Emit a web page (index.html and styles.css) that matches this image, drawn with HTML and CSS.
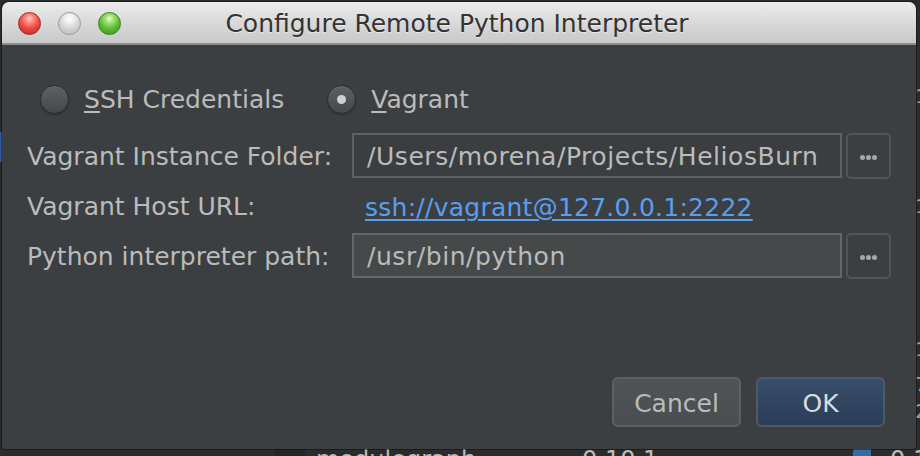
FILE: index.html
```html
<!DOCTYPE html>
<html>
<head>
<meta charset="utf-8">
<link rel="stylesheet" href="styles.css">
</head>
<body>
<div class="backdrop">
  <div class="bd-row bd-r1"><span class="bd-name"></span><span class="bd-ver">1</span></div>
  <div class="bd-row bd-sel"><span class="bd-name"></span><span class="bd-ver"></span></div>
  <div class="bd-row bd-r2"><span class="bd-name"></span><span class="bd-ver">1</span></div>
  <div class="bd-row bd-r3"><span class="bd-name"></span><span class="bd-ver">1</span></div>
  <div class="bd-row bd-r4"><span class="bd-name"></span><span class="bd-ver">7</span></div>
  <div class="bd-row bd-r5"><span class="bd-name"></span><span class="bd-ver">2</span></div>
  <div class="bd-last">
    <span class="bd-gut"></span>
    <span class="bd-col"></span>
    <span class="bd-mod">modulegraph</span>
    <span class="bd-v1">0.10.1</span>
    <span class="bd-icon"></span>
    <span class="bd-v2">0.1</span>
  </div>
</div>

<div class="dialog">
  <div class="titlebar">
    <div class="lights">
      <span class="light red"></span>
      <span class="light gray"></span>
      <span class="light green"></span>
    </div>
    <div class="title">Configure Remote Python Interpreter</div>
  </div>
  <div class="content">
    <div class="radios">
      <label class="radio"><span class="circle"></span><span class="rlabel"><u>S</u>SH Credentials</span></label>
      <label class="radio"><span class="circle checked"></span><span class="rlabel"><u>V</u>agrant</span></label>
    </div>
    <div class="form">
      <div class="label">Vagrant Instance Folder:</div>
      <div class="field">/Users/morena/Projects/HeliosBurn</div>
      <div class="browse"><span class="dot"></span><span class="dot"></span><span class="dot"></span></div>

      <div class="label">Vagrant Host URL:</div>
      <div class="linkcell"><a class="link">ssh://vagrant@127.0.0.1:2222</a></div>
      <div></div>

      <div class="label">Python interpreter path:</div>
      <div class="field field2">/usr/bin/python</div>
      <div class="browse"><span class="dot"></span><span class="dot"></span><span class="dot"></span></div>
    </div>
    <div class="footer">
      <button class="btn cancel">Cancel</button>
      <button class="btn ok">OK</button>
    </div>
  </div>
</div>
</body>
</html>
```
FILE: styles.css
```css
html, body {
  margin: 0;
  padding: 0;
}
body {
  width: 920px;
  height: 456px;
  overflow: hidden;
  background: #2b2b2b;
  position: relative;
  font-family: "DejaVu Sans", "Noto Sans", sans-serif;
}

/* backdrop (IDE behind the modal) */
.backdrop {
  display: flex;
  flex-direction: column;
  width: 920px;
  height: 456px;
  font-size: 20px;
}
.bd-row {
  display: flex;
  align-items: flex-start;
  box-sizing: border-box;
}
.bd-name { width: 915px; flex: none; }
.bd-ver { color: #a0a0a0; line-height: 16px; }
.bd-r1 { height: 132px; padding-top: 88px; }
.bd-sel { height: 30px; background: linear-gradient(to right, #2f5aa8 0 3px, transparent 3px); }
.bd-r2 { height: 178px; padding-top: 36px; }
.bd-r3 { height: 35px; padding-top: 2px; }
.bd-r4 { height: 26px; padding-top: 2px; }
.bd-r5 { height: 30px; padding-top: 3px; }
.bd-last {
  display: flex;
  height: 26px;
  margin-top: auto;
  font-size: 24px;
  color: #bbbbbb;
  line-height: 26px;
  box-sizing: border-box;
  padding-top: 17px;
  overflow: hidden;
  flex: none;
}
.bd-gut { width: 275px; flex: none; }
.bd-col { width: 30px; height: 40px; background: #232525; flex: none; margin-top: -17px; }
.bd-mod { width: 266px; padding-left: 11px; flex: none; }
.bd-v1 { width: 271px; flex: none; }
.bd-icon { width: 18px; height: 20px; background: #2f6fa8; border-radius: 60% 0 0 0; flex: none; margin-right: 19px; margin-top: -6px; }

/* dialog */
.dialog {
  position: absolute;
  left: 2px;
  top: 2px;
  width: 914px;
  height: 447px;
  background: #3c3f41;
  border-radius: 7px 7px 3px 3px;
  display: flex;
  flex-direction: column;
  overflow: hidden;
  box-shadow: 0 0 0 1px rgba(0,0,0,0.35);
}
.titlebar {
  height: 41px;
  flex: none;
  background: linear-gradient(#ececec, #d6d6d6 60%, #c9c9c9);
  border-bottom: 2px solid #8c8c8c;
  display: grid;
  grid-template-areas: "bar";
  align-items: center;
}
.lights {
  grid-area: bar;
  justify-self: start;
  display: flex;
  gap: 17px;
  padding-left: 16px;
  padding-top: 2px;
}
.light {
  width: 23px;
  height: 23px;
  border-radius: 50%;
  box-sizing: border-box;
}
.red {
  background: radial-gradient(circle at 50% 28%, #ffd0cc 0, #ff8a80 22%, #e8453c 55%, #c22a24 100%);
  border: 1px solid #9e2a25;
}
.gray {
  background: radial-gradient(circle at 50% 28%, #ffffff 0, #eeeeee 25%, #cfcfcf 60%, #b9b9b9 100%);
  border: 1px solid #9a9a9a;
}
.green {
  background: radial-gradient(circle at 50% 28%, #e6ffd6 0, #9be070 24%, #57b52f 58%, #3c9420 100%);
  border: 1px solid #3c7d24;
}
.title {
  grid-area: bar;
  justify-self: center;
  font-size: 25px;
  color: #333333;
  text-shadow: 0 1px 0 rgba(255,255,255,0.5);
  padding-top: 1px;
  margin-right: 4px;
}

.content {
  flex: 1;
  display: flex;
  flex-direction: column;
  padding: 0 31px 22px 25px;
  color: #bbbbbb;
  font-size: 25px;
}
.radios {
  display: flex;
  align-items: center;
  height: 30px;
  margin-top: 39px;
  margin-left: 13px;
  gap: 43px;
}
.radio {
  display: flex;
  align-items: center;
  gap: 15px;
}
.circle {
  width: 29px;
  height: 29px;
  box-sizing: border-box;
  border-radius: 50%;
  border: 1px solid #2a2c2d;
  background: linear-gradient(#5c6062, #44484a);
  box-shadow: inset 0 1px 0 rgba(255,255,255,0.08), 0 1px 1px rgba(0,0,0,0.3);
  display: flex;
  align-items: center;
  justify-content: center;
}
.circle.checked::after {
  content: "";
  width: 9px;
  height: 9px;
  border-radius: 50%;
  background: #d0d0d0;
}
.rlabel u {
  text-decoration-thickness: 2px;
  text-underline-offset: 3px;
}

.form {
  margin-top: 19px;
  display: grid;
  grid-template-columns: 321px 490px 45px;
  grid-auto-rows: 45px;
  column-gap: 4px;
  row-gap: 5px;
  align-items: center;
}
.label {
  white-space: nowrap;
  position: relative;
  top: 1px;
}
.field {
  height: 45px;
  box-sizing: border-box;
  border: 2px solid #5f6163;
  background: #3b3e40;
  padding-left: 13px;
  padding-top: 2px;
  display: flex;
  align-items: center;
  white-space: nowrap;
  overflow: hidden;
  letter-spacing: 0.55px;
}
.field2 {
  background: #45494a;
  border-color: #646668;
}
.linkcell {
  padding-left: 13px;
  position: relative;
  top: 2px;
}
.link {
  color: #5a9ef0;
  text-decoration: underline;
  text-decoration-thickness: 2px;
  text-underline-offset: 3px;
  white-space: nowrap;
  letter-spacing: 0.25px;
}
.browse {
  height: 46px;
  box-sizing: border-box;
  border: 2px solid #525456;
  border-radius: 5px;
  background: #3c3f41;
  display: flex;
  align-items: center;
  justify-content: center;
  gap: 1px;
  padding-top: 4px;
}
.dot {
  width: 5px;
  height: 5px;
  border-radius: 50%;
  background: #a8a8a8;
}

.footer {
  margin-top: auto;
  display: flex;
  justify-content: flex-end;
  gap: 15px;
}
.btn {
  width: 129px;
  height: 50px;
  box-sizing: border-box;
  border-radius: 6px;
  font-family: "DejaVu Sans", "Noto Sans", sans-serif;
  font-size: 25px;
  padding: 2px 0 0;
}
.cancel {
  background: linear-gradient(#505456, #4a4e50);
  border: 2px solid #5c6062;
  color: #bbbbbb;
}
.ok {
  background: linear-gradient(#384e6c, #2b3d57);
  border: 2px solid #4f5a68;
  color: #dcdcdc;
}
```
